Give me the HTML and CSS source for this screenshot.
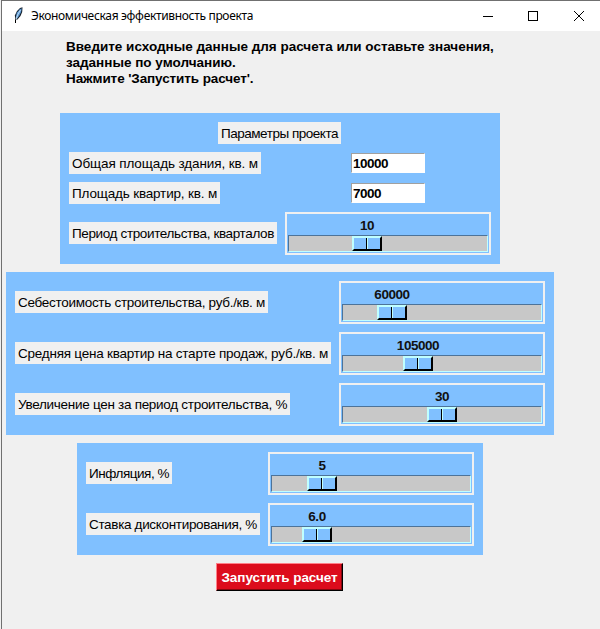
FILE: index.html
```html
<!DOCTYPE html>
<html lang="ru">
<head>
<meta charset="utf-8">
<title>Экономическая эффективность проекта</title>
<link rel="stylesheet" href="styles.css">
</head>
<body>
<div class="window">
  <header class="titlebar">
    <svg class="feather" width="12" height="17" viewBox="0 0 12 17">
      <path d="M2 15.5 2.3 11.5 1.8 8.5 4 4 7 1 9.5.3 9.2 5 7.5 9 4.5 12.5 3 13Z" fill="#17212c"/>
      <path d="M2.9 10.3 3.8 5.8 7 2.2 8.7 1.2 8.1 5 6.2 8.8 3.8 11.9Z" fill="#5b9bd8"/>
      <path d="M7.5 3 4.5 8 2.8 13.5" fill="none" stroke="#dcecf7" stroke-width=".8"/>
      <path d="M2.5 12.5V16" stroke="#000" stroke-width="1"/>
    </svg>
    <h1 class="caption">Экономическая эффективность проекта</h1>
    <svg class="controls" width="104" height="12" viewBox="0 0 104 12" fill="none" stroke="#000">
      <path d="M0 6.5H10" shape-rendering="crispEdges"/>
      <path d="M45.5 1.5H54.5V10.5H45.5Z" shape-rendering="crispEdges"/>
      <path d="M91 1 101 11M101 1 91 11"/>
    </svg>
  </header>
  <main class="content">
    <p class="intro"><span class="t-line1">Введите исходные данные для расчета или оставьте значения,</span><br><span class="t-line2">заданные по умолчанию.</span><br><span class="t-line3">Нажмите 'Запустить расчет'.</span></p>

    <section class="panel panel-project">
      <h2 class="label t-title">Параметры проекта</h2>
      <div class="row"><label class="label t-area">Общая площадь здания, кв. м</label><div class="cell"><input class="entry" value="10000"></div></div>
      <div class="row"><label class="label t-flats">Площадь квартир, кв. м</label><div class="cell"><input class="entry" value="7000"></div></div>
      <div class="row"><label class="label t-period">Период строительства, кварталов</label>
        <div class="scale" style="--pos:63px"><div class="value"><span>10</span></div><div class="trough"><div class="thumb"><i></i><i></i></div></div></div></div>
    </section>

    <section class="panel panel-prices">
      <div class="row"><label class="label t-cost">Себестоимость строительства, руб./кв. м</label>
        <div class="scale" style="--pos:34px"><div class="value"><span>60000</span></div><div class="trough"><div class="thumb"><i></i><i></i></div></div></div></div>
      <div class="row"><label class="label t-price">Средняя цена квартир на старте продаж, руб./кв. м</label>
        <div class="scale" style="--pos:60px"><div class="value"><span>105000</span></div><div class="trough"><div class="thumb"><i></i><i></i></div></div></div></div>
      <div class="row"><label class="label t-growth">Увеличение цен за период строительства, %</label>
        <div class="scale" style="--pos:84px"><div class="value"><span>30</span></div><div class="trough"><div class="thumb"><i></i><i></i></div></div></div></div>
    </section>

    <section class="panel panel-rates">
      <div class="row"><label class="label t-inflation">Инфляция, %</label>
        <div class="scale" style="--pos:35px"><div class="value"><span>5</span></div><div class="trough"><div class="thumb"><i></i><i></i></div></div></div></div>
      <div class="row"><label class="label t-discount">Ставка дисконтирования, %</label>
        <div class="scale" style="--pos:30px"><div class="value"><span>6.0</span></div><div class="trough"><div class="thumb"><i></i><i></i></div></div></div></div>
    </section>

    <button class="run">Запустить расчет</button>
  </main>
</div>
</body>
</html>
```
FILE: styles.css
```css
* { box-sizing: border-box; }
body { margin: 0; background: #f0f0f0; font: 13.5px/16px "Liberation Sans", Arial, sans-serif; color: #000; overflow: hidden; }
.window { height: 629px; margin-left: 1px; border-top: 1px solid #707070; border-left: 1px solid #707070; background: #f0f0f0; }

.titlebar { display: flex; align-items: center; height: 30px; background: #fff; padding-left: 11px; }
.feather { display: block; flex: none; margin-top: -1px; }
.caption { flex: 1; margin: 0 0 0 6px; font: 12px/16px "Noto Sans", "Open Sans", sans-serif; letter-spacing: -.33px; white-space: nowrap; }
.controls { display: block; flex: none; margin-right: 13px; }

.content { display: flow-root; }
.intro { margin: 8px 0 26px 64px; font-weight: bold; white-space: nowrap; }
.t-line3 { letter-spacing: -.1px; }

.panel { display: flex; flex-direction: column; gap: 8px; padding: 9px; background: #80c0ff; margin-bottom: 8px; }
.panel-project { width: 440px; margin-left: 58px; }
.panel-prices { width: 548px; margin-left: 4px; }
.panel-rates { width: 406px; margin-left: 75px; }
.row { display: flex; align-items: center; justify-content: space-between; }
.label { flex: none; display: block; height: 22px; margin: 0; padding: 1px 3px 0; font-size: 13.5px; font-weight: normal; line-height: 22px; background: #f0f0f0; white-space: nowrap; }
.row .scale { flex: none; }
.row:has(.scale) .label { margin-bottom: 1px; }

.t-title { width: 123px; margin-left: 149px; letter-spacing: -.48px; }
.t-area { width: 192px; letter-spacing: -.11px; }
.t-flats { width: 151px; letter-spacing: -.17px; }
.t-period { width: 208px; letter-spacing: -.37px; }
.t-cost { width: 253px; letter-spacing: -.29px; }
.t-price { width: 316px; letter-spacing: -.23px; }
.t-growth { width: 275px; letter-spacing: -.29px; }
.t-inflation { width: 86px; letter-spacing: -.48px; }
.t-discount { width: 174px; letter-spacing: -.33px; }

.cell { width: 206px; padding-left: 66px; display: flex; }
.entry { width: 74px; height: 20px; margin: 0; padding: 0 1px; border: 1px solid #fff; border-top-color: #a0a0a0; border-left-color: #a0a0a0; border-radius: 0; background: #fff; color: #000; font: bold 13.5px/18px "Liberation Sans", Arial, sans-serif; letter-spacing: -.5px; outline: none; }

.scale { width: 206px; height: 43px; border: 2px solid #f0f0f0; padding: 1px; }
.value { height: 20px; padding-left: calc(var(--pos) + 1px); }
.value span { display: flex; justify-content: center; width: 30px; font-weight: bold; line-height: 21px; letter-spacing: -.45px; color: #111; }
.trough { width: 200px; height: 17px; border: 1px solid #4d7399; border-right-color: #c0ffff; border-bottom-color: #c0ffff; background: #c8c8c8; padding-left: var(--pos); }
.thumb { display: flex; width: 30px; height: 15px; border: 2px solid #c0ffff; border-right-color: #000; border-bottom-color: #000; background: #80c0ff; }
.thumb i { flex: 1; }
.thumb i:first-child { border-right: 1px solid #000; }
.thumb i:last-child { border-left: 1px solid #c0ffff; }

.run { display: block; width: 127px; height: 28px; margin-left: 214px; padding: 1px 0 0; border: 1px solid #ff8089; border-right-color: #000; border-bottom-color: #000; border-radius: 0; background: #dc0c1c; box-shadow: inset -1px -1px #84070f; color: #fff; font: bold 13.5px/25px "Liberation Sans", Arial, sans-serif; letter-spacing: -.06px; white-space: nowrap; }
```
